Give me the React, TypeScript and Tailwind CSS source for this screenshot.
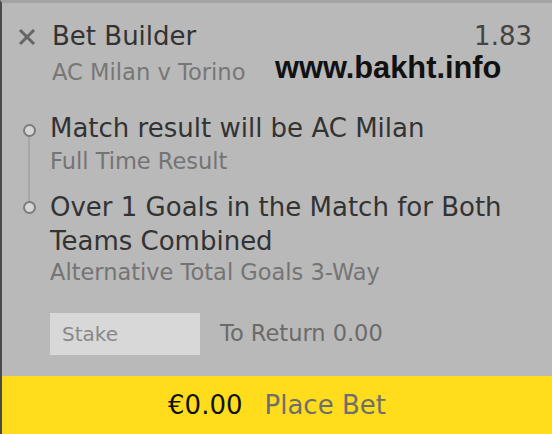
import React from "react";

const legs = [
  { title: "Match result will be AC Milan", market: "Full Time Result" },
  { title: "Over 1 Goals in the Match for Both Teams Combined", market: "Alternative Total Goals 3-Way" },
];

const Dot = () => (
  <div className="w-[13px] h-[13px] shrink-0 rounded-full border-2 border-[#7c7c7c] bg-[#d5d5d5]" />
);

const App = () => {
  return (
    <div
      className="relative w-[552px] h-[434px] flex flex-col bg-[#b9b9b9] border-l-2 border-l-[#4a4a4a] border-t-[3px] border-t-[#a3a3a3] overflow-hidden"
      style={{ fontFamily: '"DejaVu Sans", Verdana, sans-serif' }}
    >
      {/* header */}
      <div className="pt-[16px]">
        <div className="flex items-center">
          <svg className="ml-[16px] w-[18px] h-[18px] mt-[2px]" viewBox="0 0 18 18">
            <path d="M2 2L16 16M16 2L2 16" stroke="#666" strokeWidth="3" />
          </svg>
          <span className="ml-[16px] text-[26px] leading-[34px] text-[#333]">Bet Builder</span>
          <span className="ml-auto pr-[20px] text-[26px] leading-[34px] text-[#444]">1.83</span>
        </div>
        <div className="pl-[50px] mt-[5px] text-[22.6px] leading-[28px] text-[#777]">AC Milan v Torino</div>
      </div>

      {/* watermark */}
      <div
        className="absolute left-[273px] top-[50px] text-[30.8px] leading-[30px] font-bold text-[#111]"
        style={{ fontFamily: '"Liberation Sans", Arial, sans-serif' }}
      >
        www.bakht.info
      </div>

      {/* legs */}
      <div className="mt-[25px] pl-[21px] pr-[16px] flex flex-col">
        {legs.map((leg, i) => (
          <div key={i} className="flex">
            <div className="w-[27px] shrink-0 flex flex-col">
              {i === 0 ? (
                <>
                  <div className="mt-[13px]"><Dot /></div>
                  <div className="ml-[5px] w-[2px] flex-1 bg-[#a6a6a6]" />
                </>
              ) : (
                <>
                  <div className="ml-[5px] w-[2px] h-[11px] bg-[#a6a6a6]" />
                  <Dot />
                </>
              )}
            </div>
            <div className={i === 0 ? "pb-[15px]" : ""}>
              <div className="text-[26px] leading-[34px] text-[#333]">{leg.title}</div>
              <div className={`${i === 0 ? "mt-[2px]" : ""} text-[22.5px] leading-[28px] text-[#747474]`}>{leg.market}</div>
            </div>
          </div>
        ))}
      </div>

      {/* stake */}
      <div className="mt-[27px] pl-[48px] flex items-center">
        <div className="w-[150px] h-[42px] bg-[#d8d8d8] flex items-center pl-[12px] text-[20px] text-[#888]">Stake</div>
        <div className="ml-[20px] text-[22.5px] text-[#6b6b6b]">To Return 0.00</div>
      </div>

      <div className="flex-1" />

      {/* place bet */}
      <div className="h-[58px] bg-[#ffdd1d] flex items-center justify-center text-[26px]">
        <span className="text-[#111]">€0.00</span>
        <span className="ml-[22px] text-[#6e6e6e]">Place Bet</span>
      </div>
    </div>
  );
};

export default App;
